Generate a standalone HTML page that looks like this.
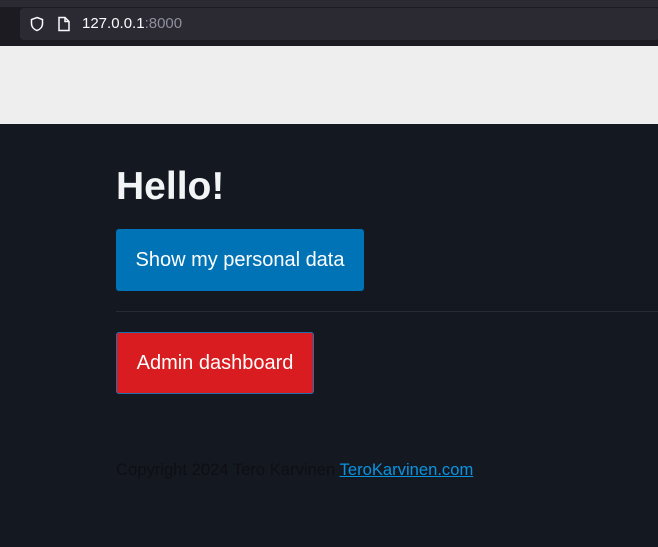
<!DOCTYPE html>
<html><head><meta charset="utf-8"><style>
*{margin:0;padding:0;box-sizing:border-box}
body{width:658px;height:547px;overflow:hidden;background:#141821;font-family:"Liberation Sans",sans-serif;position:relative}
.chrome{position:absolute;left:0;top:0;width:658px;height:46px;background:#1c1b22}
.topline{position:absolute;left:0;top:0;width:658px;height:7px;background:#2b2a33}
.url{position:absolute;left:20px;top:8px;width:640px;height:32px;background:#2b2a33;border-radius:4px}
.url span{position:absolute;left:62px;top:7px;font-size:15px;color:#fbfbfe}
.url span i{font-style:normal;color:#8f8f9d}
.band{position:absolute;left:0;top:46px;width:658px;height:78px;background:#eeeeee}
h1{position:absolute;left:116px;top:165px;font-size:39px;color:#f3f4f6;font-weight:bold}
.btn{position:absolute;left:116px;border-radius:3px;color:#fff;font-size:20px;text-align:center;line-height:62px}
.b1{top:229px;width:248px;height:62px;background:#0073b7}
.b2{top:332px;width:198px;height:62px;background:#d81c1f;border:1px solid #1f6fb0;line-height:60px}
hr{position:absolute;left:116px;top:311px;width:542px;border:0;border-top:1px solid #262b34}
.foot{position:absolute;left:116px;top:460px;font-size:16.6px;color:#0d0f14}
.foot a{color:#0a93e0}
</style></head><body>
<div class="chrome"><div class="topline"></div><div class="url">
<svg style="position:absolute;left:9px;top:8px" width="16" height="16" viewBox="0 0 16 16"><path d="M8 1.5 L13.5 3.5 V7.5 C13.5 11 11 13.5 8 14.5 C5 13.5 2.5 11 2.5 7.5 V3.5 Z" fill="none" stroke="#fbfbfe" stroke-width="1.5"/></svg>
<svg style="position:absolute;left:37px;top:8px" width="14" height="16" viewBox="0 0 14 16"><path d="M2 1.5 H8 L12 5.5 V14.5 H2 Z M8 1.5 V5.5 H12" fill="none" stroke="#fbfbfe" stroke-width="1.5"/></svg>
<span>127.0.0.1<i>:8000</i></span></div></div>
<div class="band"></div>
<h1>Hello!</h1>
<div class="btn b1">Show my personal data</div>
<hr>
<div class="btn b2">Admin dashboard</div>
<div class="foot">Copyright 2024 Tero Karvinen <a href="#">TeroKarvinen.com</a></div>
</body></html>
